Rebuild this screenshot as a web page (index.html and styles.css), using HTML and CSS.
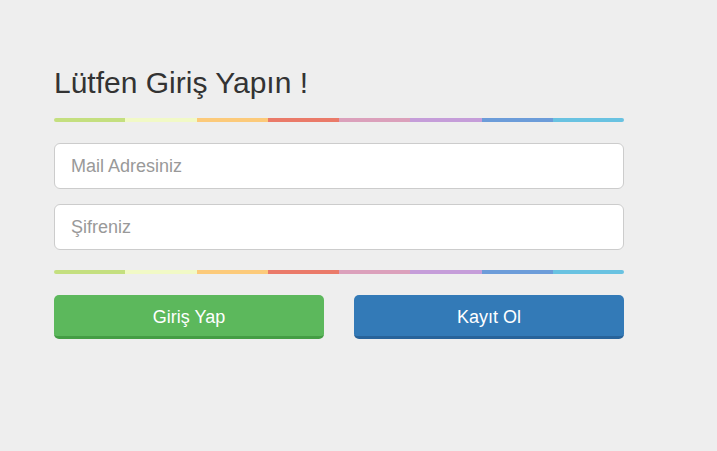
FILE: index.html
```html
<!DOCTYPE html>
<html lang="tr">
<head>
<meta charset="utf-8">
<title>Giriş</title>
<link rel="stylesheet" href="styles.css">
</head>
<body>
<div class="wrap">
  <form class="login">
    <h1 class="title">Lütfen Giriş Yapın !</h1>
    <div class="rainbow"><span class="c1"></span><span class="c2"></span><span class="c3"></span><span class="c4"></span><span class="c5"></span><span class="c6"></span><span class="c7"></span><span class="c8"></span></div>
    <input class="field first" type="text" placeholder="Mail Adresiniz">
    <input class="field" type="password" placeholder="Şifreniz">
    <div class="rainbow second"><span class="c1"></span><span class="c2"></span><span class="c3"></span><span class="c4"></span><span class="c5"></span><span class="c6"></span><span class="c7"></span><span class="c8"></span></div>
    <div class="actions">
      <button type="button" class="btn btn-green">Giriş Yap</button>
      <button type="button" class="btn btn-blue">Kayıt Ol</button>
    </div>
  </form>
</div>
</body>
</html>
```
FILE: styles.css
```css
html, body {
  margin: 0;
  padding: 0;
  background: #eeeeee;
  font-family: "Liberation Sans", Arial, sans-serif;
  color: #333;
}
.wrap {
  padding: 66px 0 0 54px;
}
.login {
  width: 570px;
  display: flex;
  flex-direction: column;
}
.title {
  margin: 0;
  font-size: 30px;
  font-weight: normal;
  line-height: 33px;
  color: #333;
}
.rainbow {
  display: flex;
  height: 4px;
  border-radius: 2px;
  overflow: hidden;
  margin-top: 19px;
}
.rainbow.second {
  margin-top: 20px;
}
.rainbow span { flex: 1; }
.c1 { background: #c4df7f; }
.c2 { background: #f1f9c6; }
.c3 { background: #fcca7a; }
.c4 { background: #ea7a69; }
.c5 { background: #dba0bb; }
.c6 { background: #c59dd9; }
.c7 { background: #6c9cd9; }
.c8 { background: #69c2e1; }
.field {
  box-sizing: border-box;
  height: 46px;
  width: 100%;
  margin: 15px 0 0;
  padding: 0 16px;
  border: 1px solid #cccccc;
  border-radius: 6px;
  background: #fff;
  font-family: "Liberation Sans", Arial, sans-serif;
  font-size: 18px;
  color: #555;
  outline: none;
}
.field.first { margin-top: 21px; }
.field::placeholder { color: #999; }
.actions {
  display: flex;
  gap: 30px;
  margin-top: 21px;
}
.btn {
  flex: 1;
  box-sizing: border-box;
  height: 44px;
  border: 0;
  border-bottom: 3px solid;
  border-radius: 5px;
  color: #fff;
  font-family: "Liberation Sans", Arial, sans-serif;
  font-size: 18px;
  padding: 4px 0 0;
  cursor: pointer;
}
.btn-green {
  background: #5cb85c;
  border-bottom-color: #449d44;
}
.btn-blue {
  background: #337ab7;
  border-bottom-color: #28639a;
}
```
